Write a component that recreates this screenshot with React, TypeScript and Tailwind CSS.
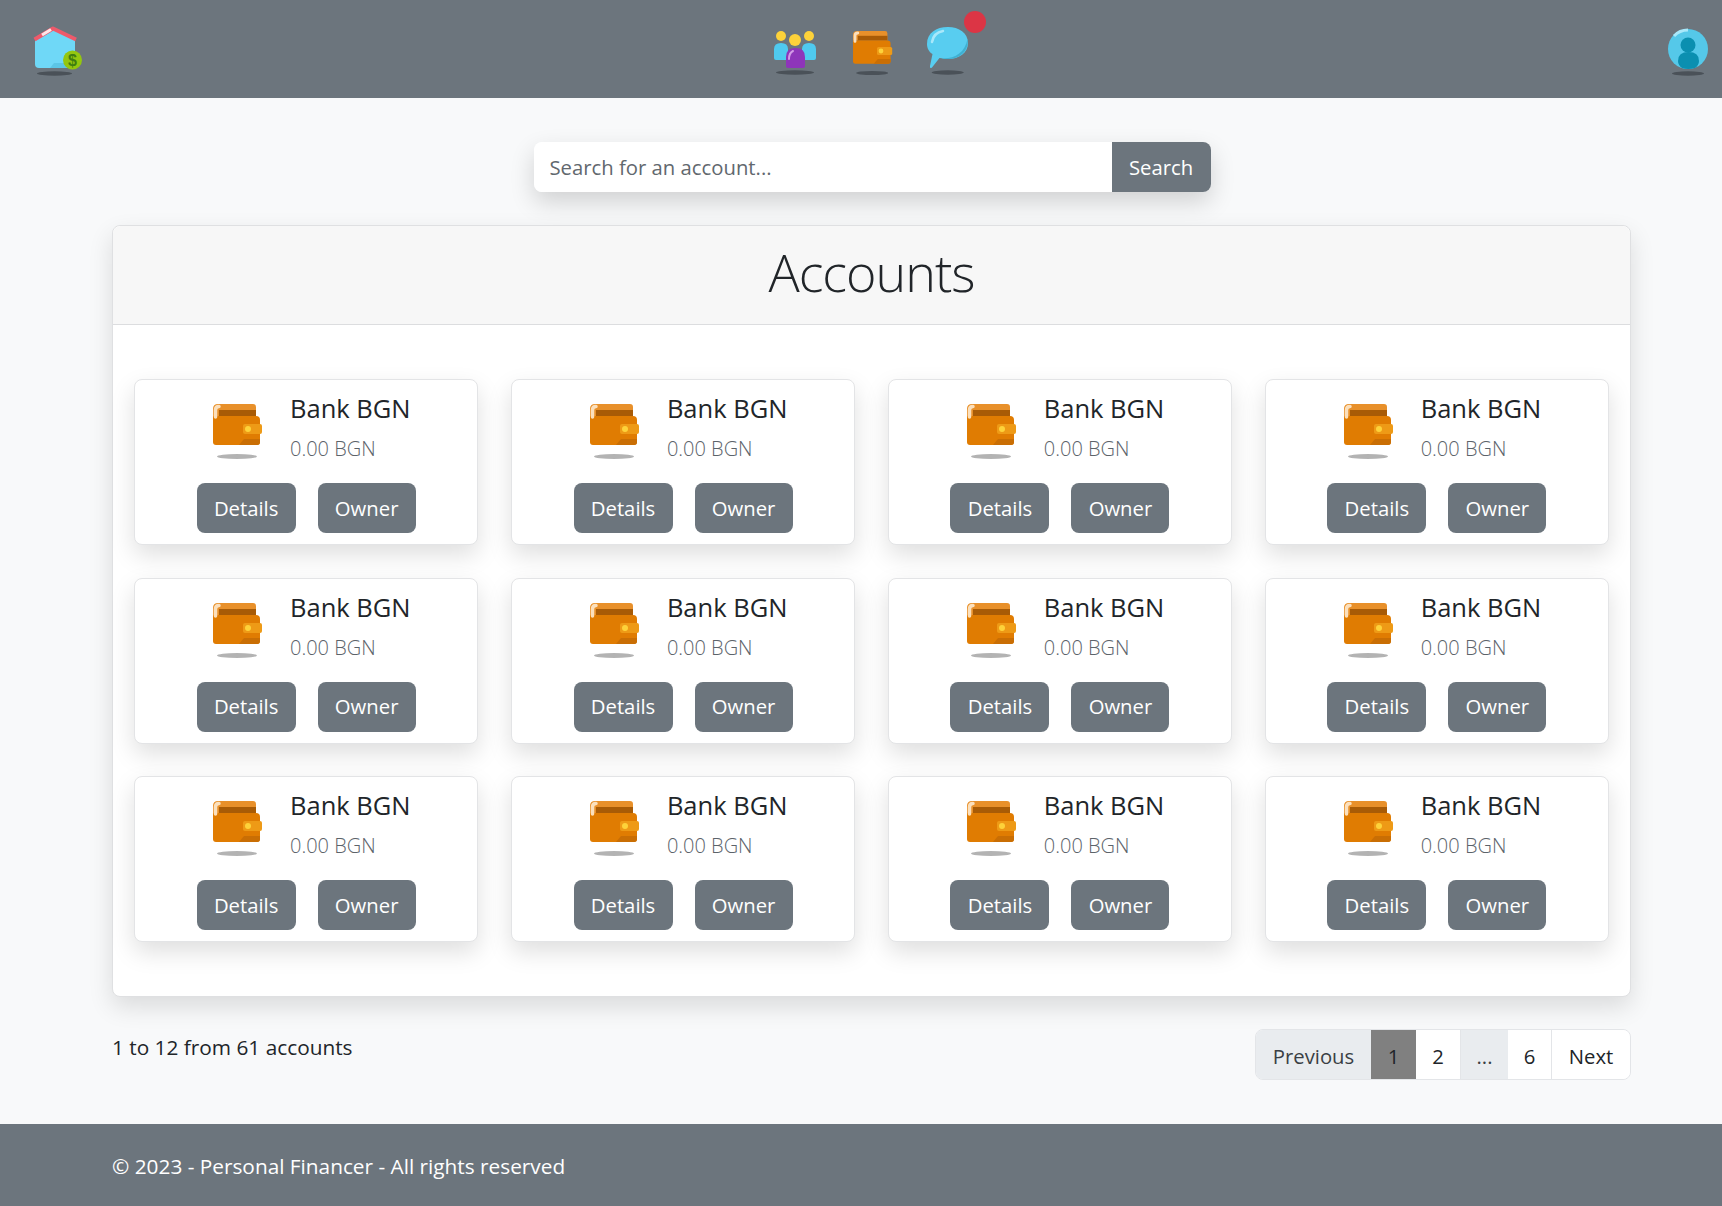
const accounts = Array.from({ length: 12 }, (_, i) => i);

const NAV_SHADOW = "#3f454c";

function HomeIcon() {
  return (
    <svg width="50" height="50" viewBox="0 0 50 50" className="block">
      <ellipse cx="21.5" cy="47.5" rx="17.5" ry="2.2" fill={NAV_SHADOW} opacity="0.75" />
      <path d="M2 13 L20 2 L42 13 V38 Q42 42 38 42 H6 Q2 42 2 38 Z" fill="#6fd8f7" />
      <path d="M17 42 L21 37 H42 V38 Q42 42 38 42 Z" fill="#5cc6e6" />
      <path d="M1.5 13.5 L20 2.5 L43 13.5" stroke="#ee5a6b" strokeWidth="4" fill="none" strokeLinejoin="round" />
      <path d="M9 9 L18 3.5" stroke="#fde6e9" strokeWidth="3" fill="none" />
      <circle cx="39.5" cy="34" r="9.5" fill="#94c70f" />
      <text x="39.5" y="40" textAnchor="middle" fontSize="16" fontWeight="700" fill="#3f7d10" fontFamily="Liberation Sans, sans-serif">$</text>
    </svg>
  );
}

function PeopleIcon() {
  return (
    <svg width="42" height="50" viewBox="0 0 42 50" className="block">
      <ellipse cx="21" cy="47.5" rx="19" ry="2.2" fill={NAV_SHADOW} opacity="0.75" />
      <circle cx="7" cy="11" r="5" fill="#fdd23a" />
      <circle cx="35" cy="11" r="5" fill="#fdd23a" />
      <circle cx="21" cy="15" r="6" fill="#fdd23a" />
      <path d="M0 24 Q0 18 7 18 Q14 18 14 24 V33 Q14 35 12 35 H2 Q0 35 0 33 Z" fill="#4fcaef" />
      <path d="M28 24 Q28 18 35 18 Q42 18 42 24 V33 Q42 35 40 35 H30 Q28 35 28 33 Z" fill="#4fcaef" />
      <path d="M12 32 Q12 23 21.5 23 Q31 23 31 32 V41 Q31 43 29 43 H14 Q12 43 12 41 Z" fill="#8e35ba" />
      <path d="M15 34 Q15 28 19 26" stroke="#d39be6" strokeWidth="2" fill="none" strokeLinecap="round" />
    </svg>
  );
}

function WalletIcon({ width, shadow }: { width: number; shadow: string }) {
  return (
    <svg width={width} height={(width * 58) / 50} viewBox="0 0 50 58" className="block">
      <ellipse cx="24" cy="52.5" rx="20" ry="2.6" fill={shadow} opacity="0.75" />
      <path d="M0 5 Q0 0 5 0 H40 Q43 0 43 3 V12 H0 Z" fill="#e8902a" />
      <rect x="6" y="6" width="37" height="6" fill="#a85b06" />
      <path d="M0 12 H43 Q47 12 47 16 V38 Q47 41 44 41 H3 Q0 41 0 38 Z" fill="#e07c02" />
      <path d="M26 41 L31 35 H47 V38 Q47 41 44 41 Z" fill="#c96e04" />
      <rect x="30" y="20" width="19" height="10" rx="2" fill="#ee9a16" />
      <circle cx="35" cy="25" r="3" fill="#fdd23a" />
      <path d="M2.5 13 V6 Q2.5 2.5 6 2.5" stroke="#fbe0bd" strokeWidth="3.5" fill="none" strokeLinecap="round" />
    </svg>
  );
}

function ChatIcon() {
  return (
    <svg width="41" height="50" viewBox="0 0 41 50" className="block">
      <ellipse cx="20.7" cy="47.5" rx="16" ry="2.2" fill={NAV_SHADOW} opacity="0.75" />
      <path d="M0 19 C0 8 9 2 21 2 C32 2 41 8 41 18 C41 28 32 34 21 34 C18 34 15 33.5 12.5 33 L5 42.5 Q2.5 44 3 41 L5.5 29 C2 27 0 23 0 19 Z" fill="#58cdf0" />
      <path d="M13 33 C25 35 38 29 40.5 14 C42.5 25 33 34 21 34 C18 34 15 33.5 13 33 Z" fill="#3fb0d2" />
      <path d="M5 17 C6 11 10 7 16 6" stroke="#a9e8fa" strokeWidth="2.5" fill="none" strokeLinecap="round" />
    </svg>
  );
}

function UserIcon() {
  return (
    <svg width="40" height="50" viewBox="0 0 40 50" className="block">
      <ellipse cx="20" cy="47.5" rx="16" ry="2.2" fill={NAV_SHADOW} opacity="0.75" />
      <circle cx="20" cy="23" r="20" fill="#55c8e9" />
      <path d="M6 10 A19 19 0 0 1 20 4" stroke="#a9e8fa" strokeWidth="3" fill="none" />
      <circle cx="20" cy="19" r="7.5" fill="#0b8fb0" />
      <path d="M10 35 Q10 26 20.5 26 Q31 26 31 35 Q31 39 27 42 Q20 44 14 42 Q10 39 10 35 Z" fill="#0b8fb0" />
    </svg>
  );
}

function AccountCard() {
  return (
    <div className="flex h-[166px] flex-col rounded-lg border border-[#e3e4e6] bg-white pt-[11px] shadow-[0_10px_24px_rgba(0,0,0,.13)]">
      <div className="flex h-[80px] pl-[78px]">
        <div className="mt-[13px] w-[50px] shrink-0">
          <WalletIcon width={50} shadow="#9a9a9a" />
        </div>
        <div className="ml-[27px]">
          <div className="text-[25.5px] leading-[34px] text-[#212529]">Bank BGN</div>
          <div className="mt-[10px] text-[20px] font-light leading-[27px] text-[#5c636a]">0.00 BGN</div>
        </div>
      </div>
      <div className="mt-[12px] flex justify-center gap-[22px]">
        <button className="h-[50px] w-[99px] rounded-lg bg-[#6c757d] text-[20.3px] text-white">Details</button>
        <button className="h-[50px] w-[98px] rounded-lg bg-[#6c757d] text-[20.3px] text-white">Owner</button>
      </div>
    </div>
  );
}

export default function App() {
  return (
    <div className="flex h-[1206px] flex-col bg-[#f8f9fa] font-['Open_Sans','Noto_Sans',sans-serif] text-[#212529]">
      {/* NAVBAR */}
      <nav className="flex h-[98px] shrink-0 items-center bg-[#6c757d] pl-[33px] pr-[14px] pt-[4px]">
        <div className="flex-1">
          <HomeIcon />
        </div>
        <div className="flex items-start">
          <PeopleIcon />
          <div className="ml-[37px] mt-[6px]">
            <WalletIcon width={40} shadow={NAV_SHADOW} />
          </div>
          <div className="relative ml-[34px]">
            <ChatIcon />
            <span className="absolute -top-[14px] left-[37px] h-[22px] w-[22px] rounded-full bg-[#dc3545]" />
          </div>
        </div>
        <div className="flex flex-1 justify-end">
          <UserIcon />
        </div>
      </nav>

      {/* SEARCH */}
      <div className="mt-[44px] flex justify-center pl-[22px]">
        <div className="flex h-[50px] w-[677px] rounded-lg shadow-[0_10px_24px_rgba(0,0,0,.16)]">
          <div className="flex flex-1 items-center rounded-l-lg bg-white pl-4 pt-[1px] text-[20.3px] text-[#62686e]">
            Search for an account...
          </div>
          <button className="w-[99px] rounded-r-lg bg-[#6c757d] pt-[1px] text-[20.3px] text-white">Search</button>
        </div>
      </div>

      {/* ACCOUNTS */}
      <main className="ml-[112px] mr-[91px] mt-[33px] rounded-lg border border-[#dfe0e2] bg-white shadow-[0_10px_24px_rgba(0,0,0,.12)]">
        <div className="flex h-[99px] items-center justify-center rounded-t-lg border-b border-[#dcdddf] bg-[#f7f7f7] pb-[6px]">
          <h1 className="text-[52px] font-light leading-none tracking-[-1px] text-[#212529]">Accounts</h1>
        </div>
        <div className="grid grid-cols-4 gap-x-[32.6px] gap-y-[32.6px] px-[21px] pb-[54px] pt-[54px]">
          {accounts.map((id) => (
            <AccountCard key={id} />
          ))}
        </div>
      </main>

      {/* PAGINATION */}
      <div className="ml-[112px] mr-[91px] mt-[32px] flex items-start justify-between">
        <p className="mt-[3px] text-[20.8px] leading-[30px]">1 to 12 from 61 accounts</p>
        <div className="flex h-[51px] overflow-hidden rounded-lg border border-[#e3e5e8] text-[20.3px]">
          <span className="flex w-[115px] items-center justify-center bg-[#e9ecef] pt-[3px] text-[#3a3f44]">Previous</span>
          <span className="flex w-[45px] items-center justify-center bg-[#808080] pt-[3px]">1</span>
          <span className="flex w-[45px] items-center justify-center border-r border-[#e3e5e8] bg-white pt-[3px]">2</span>
          <span className="flex w-[47px] items-center justify-center bg-[#e9ecef] pt-[3px] text-[#3a3f44]">...</span>
          <span className="flex w-[44px] items-center justify-center border-r border-[#e3e5e8] bg-white pt-[3px]">6</span>
          <span className="flex w-[78px] items-center justify-center bg-white pt-[3px]">Next</span>
        </div>
      </div>

      {/* FOOTER */}
      <footer className="mt-auto flex h-[82px] items-center bg-[#6c757d] px-[112px] pt-[4px] text-[20.8px] text-white">
        © 2023 - Personal Financer - All rights reserved
      </footer>
    </div>
  );
}
